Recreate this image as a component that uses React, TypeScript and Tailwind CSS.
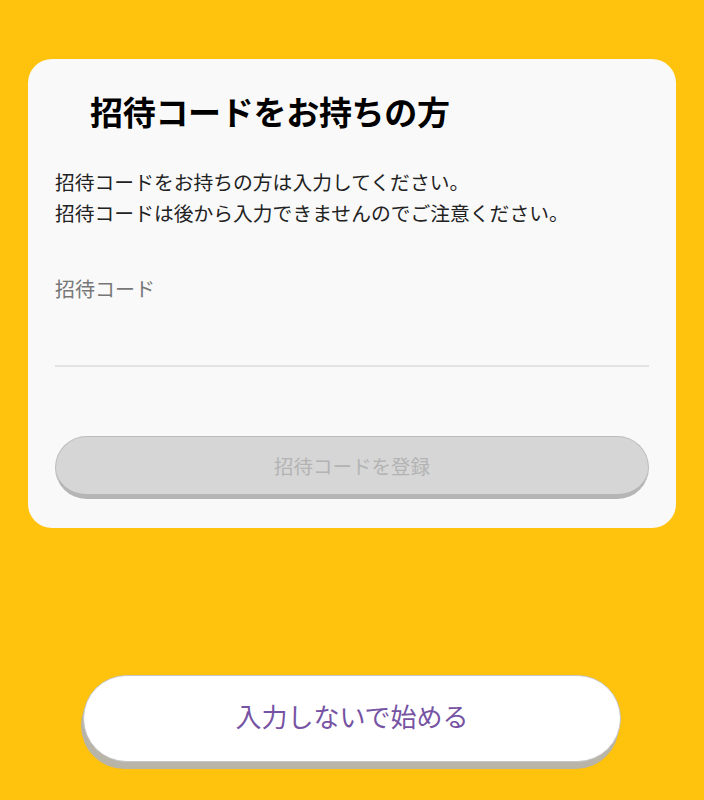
const jp = { fontFamily: '"Noto Sans CJK JP", "Noto Sans", sans-serif' };

export default function App() {
  return (
    <div className="w-[704px] h-[800px] bg-[#ffc20d] flex flex-col" style={jp}>
      {/* Invite card */}
      <div className="mx-[28px] mt-[59px] h-[469px] rounded-[24px] bg-[#f9f9f9] px-[27px] flex flex-col">
        <h1 className="mt-[30px] pl-[35px] text-[33px] leading-[44px] font-bold text-black tracking-[-0.3px]">
          招待コードをお持ちの方
        </h1>
        <div className="mt-[33px] text-[19.8px] leading-[31px] text-[#222]">
          <p>招待コードをお持ちの方は入力してください。</p>
          <p>招待コードは後から入力できませんのでご注意ください。</p>
        </div>
        <label className="mt-[47px] text-[20px] leading-[28px] text-[#777]">招待コード</label>
        <div className="mt-[62px] h-[2px] bg-[#e3e3e3]"></div>
        <button
          disabled
          className="mt-[69px] h-[63px] rounded-full bg-[#d6d6d6] border border-[#bdbdbd] border-b-[5px] border-b-[#b5b5b5] text-[19.5px] text-[#b3b3b3]"
        >
          招待コードを登録
        </button>
      </div>

      {/* Skip button */}
      <button className="mx-[83px] mt-[147px] h-[87px] rounded-full bg-white border border-[#c4c4c4] shadow-[-2px_7px_0_#b8b4a8] text-[26px] text-[#7653a3] pb-[6px]">
        入力しないで始める
      </button>
    </div>
  );
}
